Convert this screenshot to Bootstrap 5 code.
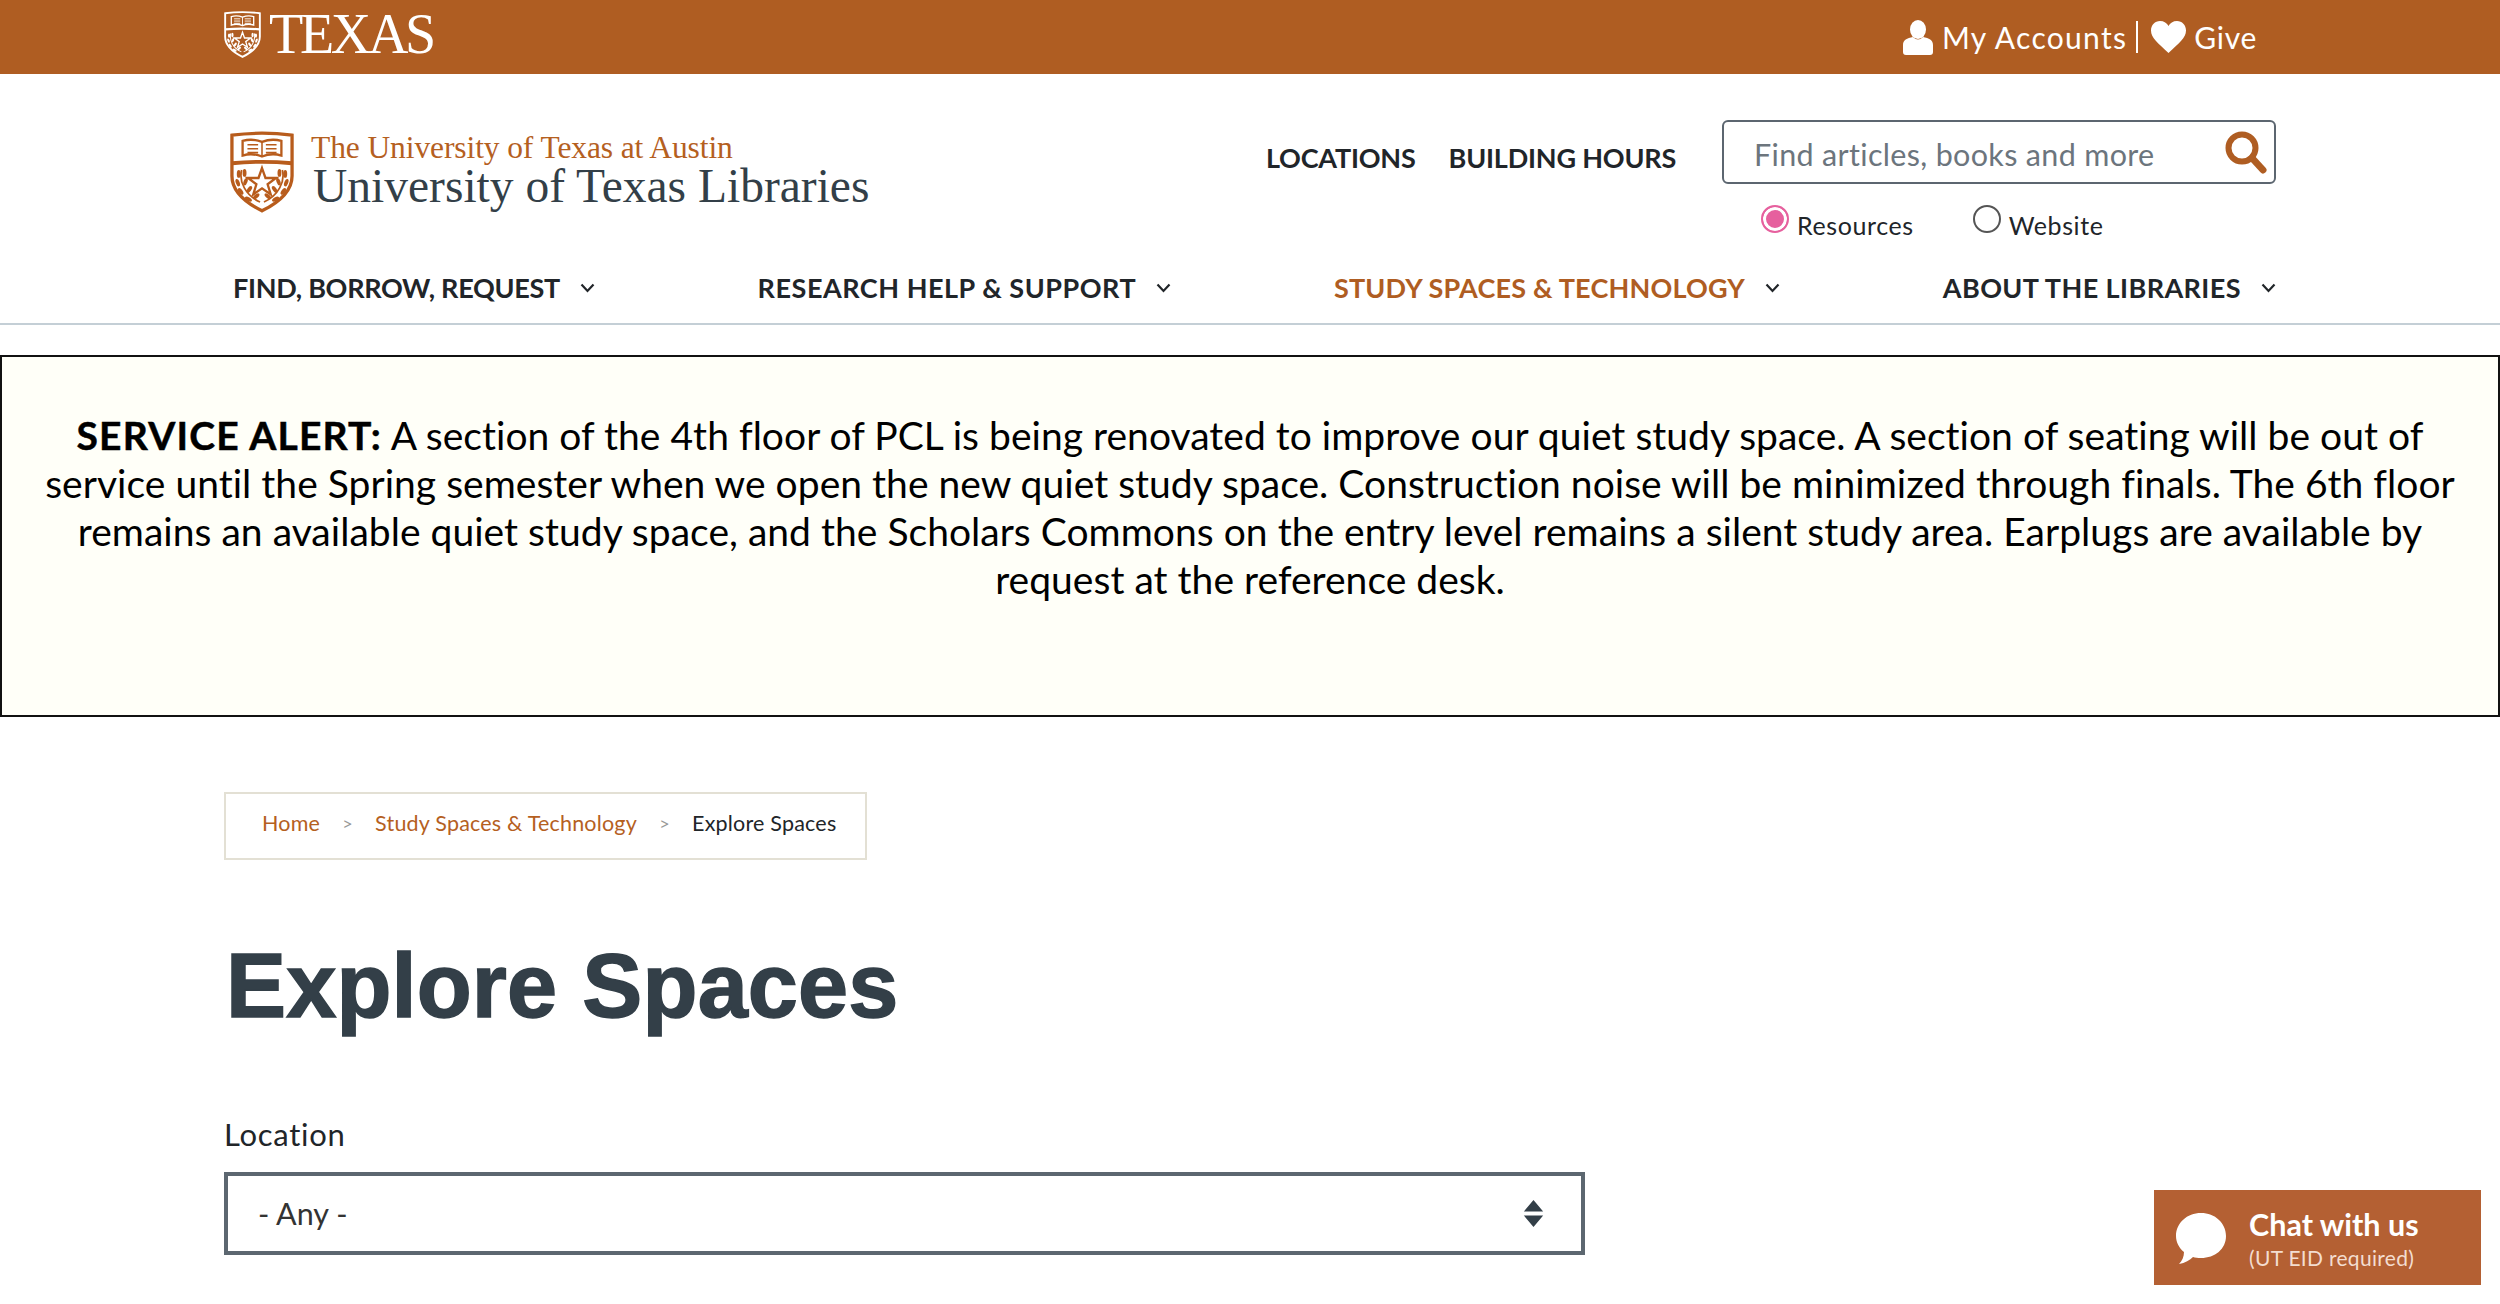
<!DOCTYPE html>
<html lang="en">
<head>
<meta charset="utf-8">
<title>Explore Spaces</title>
<link href="https://cdn.jsdelivr.net/npm/bootstrap@5.3.0/dist/css/bootstrap.min.css" rel="stylesheet">
<style>
html,body{height:100%;overflow:hidden}
body{font-family:Lato,"Liberation Sans",sans-serif;color:#212529;background:#fff}
a{text-decoration:none}
.topbar{background:#af5d22;height:74px;color:#fff}
.wrap{margin-left:224px;margin-right:224px}
.tx-brand{font:56px/1 "Liberation Serif",serif;color:#fff;height:74px;margin-top:-6px;letter-spacing:-3.3px}
.tx-links{font-size:30px;color:#fff;padding-right:19px}
.tx-links a{color:#fff}
.tx-acct{letter-spacing:1.3px}
.tx-give{letter-spacing:.7px}
.tx-sep{border-left:2px solid #fff;height:32px;margin:0 13px 0 9px}
.head-row{padding-top:46px}
.lg-link{margin-top:10px}
.lg-shield{width:64px;height:84px;color:#b85c1c;margin-left:6px}
.lg-text{font-family:"Liberation Serif",serif;margin-left:17px}
.lg-a{font-size:31.5px;line-height:36px;color:#b5601f;letter-spacing:-.1px}
.lg-b{font-size:47.5px;line-height:46px;color:#333f48;margin-left:2px;margin-top:-3px}
.head-links{height:76px;column-gap:33px}
.head-link{font-size:27px;font-weight:700;color:#212529;letter-spacing:-.2px}
.search-col{width:554px;margin-left:46px}
.search-box{height:64px;border:2px solid #5c6670;border-radius:6px;background:#fff;padding-right:6px}
.search-box input{border:0;outline:0;flex:1;min-width:0;height:100%;background:transparent;padding:3px 0 0 30px;font-size:30.5px;letter-spacing:.33px;color:#333}
.search-box input::placeholder{color:#6c757d;opacity:1}
.radio-row{margin-top:20px;padding-left:39px;font-size:25px;gap:59px}
.radio-row .form-check{padding:0;margin:0;min-height:0;display:flex;align-items:flex-start;gap:8px}
.radio-row .form-check-input{float:none;margin:1px 0 0;width:28px;height:28px;border:2px solid #555;background-image:none;flex:none;background:#fff}
.radio-row .form-check-input:checked{border-color:#e6609e;background:#e6609e;box-shadow:inset 0 0 0 3px #fff}
.radio-row .form-check-label{line-height:30px;margin-top:6px;letter-spacing:.6px}
.main-nav{padding:13px 0 0 9px;height:83px}
.main-nav a{font-size:27px;font-weight:700;color:#212529;gap:20px;line-height:40px}
.main-nav a.on{color:#af5d22}
.nv-a{letter-spacing:-.3px}
.nv-b{letter-spacing:.53px}
.nv-c{letter-spacing:.2px}
.nv-d{letter-spacing:.42px}
.chev-dark{color:#212529}
.nav-line{height:2px;background:#c4cfd6}
.svc-alert{margin-top:30px;height:362px;border:2px solid #111;background:#fffff8;color:#000;padding:54px 20px 0;font-size:39px;line-height:48px;border-radius:0;text-align:center;letter-spacing:.03px}
.svc-alert strong{letter-spacing:1.2px;-webkit-text-stroke:.5px #000}
.crumbs{margin-top:75px;width:643px;height:68px;border:2px solid #e3e0d4;padding:0 0 6px 36px;font-size:21.5px;letter-spacing:.2px}
.crumbs a{color:#b5601f}
.crumb-item{color:#212529}
.crumb-gt{color:#999;width:55px;text-align:center;font-size:18px}
.pg-title{font:700 90px/1.2 "Liberation Sans",sans-serif;color:#333f48;margin:72px 0 0 2px;letter-spacing:.15px;-webkit-text-stroke:1.5px #333f48}
.fld-label{font-size:31px;line-height:40px;margin:74px 0 18px;display:block;letter-spacing:.7px}
.fld-select{width:1361px;height:83px;border:4px solid #5c6770;border-radius:0;font-size:30.5px;padding:0 0 0 30px;color:#333;background-color:#fff;background-position:right 35px center;background-size:25px 29px;background-image:url("data:image/svg+xml,%3Csvg xmlns='http://www.w3.org/2000/svg' viewBox='0 0 24 30'%3E%3Cpath d='M12 1l10 12H2zM2 17h20L12 29z' fill='%23333f48'/%3E%3C/svg%3E")}
.chat-btn{position:fixed;left:2154px;top:1190px;width:327px;height:95px;background:#b46033;color:#fff;padding-left:21px;gap:22px}
.chat-a{font-size:30.5px;font-weight:700;line-height:36px;margin-top:2px}
.chat-b{font-size:21px;line-height:26px;color:#f3ddd0;margin-top:3px;letter-spacing:.3px}
</style>
</head>
<body>
<svg width="0" height="0" class="position-absolute">
<symbol id="shield" viewBox="0 0 66 84">
<path d="M2 4Q33 0 64 4V46C64 63 47 75 33 82C19 75 2 63 2 46Z" fill="none" stroke="currentColor" stroke-width="3.4"/>
<path d="M2 33Q33 30 64 33" fill="none" stroke="currentColor" stroke-width="4"/>
<path d="M13 10Q23 7 33 11Q43 7 53 10V25Q43 22 33 26Q23 22 13 25Z" fill="none" stroke="currentColor" stroke-width="2.4"/>
<path d="M33 11V26M18 14h11M18 18h11M18 22h11M37 14h11M37 18h11M37 22h11" fill="none" stroke="currentColor" stroke-width="1.6"/>
<path d="M33 38l3.600 10.200h10.900l-8.700 6.500 3.200 10.400-9-6.200-9 6.200 3.200-10.400-8.700-6.500h10.900z" fill="none" stroke="currentColor" stroke-width="2.400"/>
<path d="M12 40C9 52 16 66 31 73M54 40C57 52 50 66 35 73" fill="none" stroke="currentColor" stroke-width="1.8"/>
<g fill="currentColor"><ellipse cx="9" cy="44" rx="2" ry="4"/><ellipse cx="15" cy="43" rx="2" ry="4"/><ellipse cx="8" cy="53" rx="2" ry="4" transform="rotate(-20 8 53)"/><ellipse cx="16" cy="52" rx="2" ry="4" transform="rotate(20 16 52)"/><ellipse cx="11" cy="62" rx="2" ry="4" transform="rotate(-35 11 62)"/><ellipse cx="20" cy="60" rx="2" ry="4" transform="rotate(35 20 60)"/><ellipse cx="19" cy="70" rx="2" ry="4" transform="rotate(-60 19 70)"/><ellipse cx="27" cy="67" rx="2" ry="4" transform="rotate(50 27 67)"/><ellipse cx="57" cy="44" rx="2" ry="4"/><ellipse cx="51" cy="43" rx="2" ry="4"/><ellipse cx="58" cy="53" rx="2" ry="4" transform="rotate(20 58 53)"/><ellipse cx="50" cy="52" rx="2" ry="4" transform="rotate(-20 50 52)"/><ellipse cx="55" cy="62" rx="2" ry="4" transform="rotate(35 55 62)"/><ellipse cx="46" cy="60" rx="2" ry="4" transform="rotate(-35 46 60)"/><ellipse cx="47" cy="70" rx="2" ry="4" transform="rotate(60 47 70)"/><ellipse cx="39" cy="67" rx="2" ry="4" transform="rotate(-50 39 67)"/></g>
</symbol>
<symbol id="chev" viewBox="0 0 15 10"><path d="M1.500 1.500L7.500 8l6-6.500" fill="none" stroke="currentColor" stroke-width="2.200"/></symbol>
</svg>

<div class="topbar">
  <div class="wrap d-flex justify-content-between align-items-center h-100">
    <a href="#" class="tx-brand d-flex align-items-center gap-2">
      <svg width="37" height="47"><use href="#shield"/></svg><span>TEXAS</span>
    </a>
    <div class="tx-links d-flex align-items-center">
      <a href="#" class="tx-acct d-flex align-items-center gap-2">
        <svg width="32" height="35" viewBox="0 0 32 35" fill="#fff"><ellipse cx="16" cy="9.500" rx="8" ry="9.500"/><path d="M11 17c-6 1-10 3-10 8v7q0 3 3 3h24q3 0 3-3v-7c0-5-4-7-10-8q-5 5-10 0z"/></svg>
        My Accounts</a>
      <span class="tx-sep"></span>
      <a href="#" class="tx-give d-flex align-items-center gap-2">
        <svg width="35" height="32" viewBox="0 0 35 32" fill="#fff"><path d="M17.500 32C7 22 0 17 0 9.500 0 4 4 0 9 0c4 0 7 2 8.500 5C19 2 22 0 26 0c5 0 9 4 9 9.500C35 17 28 22 17.500 32z"/></svg>
        Give</a>
    </div>
  </div>
</div>

<header>
  <div class="wrap">
    <div class="head-row d-flex align-items-start">
      <a href="#" class="lg-link d-flex align-items-start">
        <svg class="lg-shield"><use href="#shield"/></svg>
        <div class="lg-text">
          <div class="lg-a">The University of Texas at Austin</div>
          <div class="lg-b">University of Texas Libraries</div>
        </div>
      </a>
      <div class="head-links ms-auto d-flex align-items-center">
        <a href="#" class="head-link">LOCATIONS</a>
        <a href="#" class="head-link">BUILDING HOURS</a>
      </div>
      <div class="search-col">
        <form class="search-box d-flex align-items-center">
          <input type="text" placeholder="Find articles, books and more" aria-label="Search">
          <svg width="44" height="44" viewBox="0 0 44 44"><circle cx="18" cy="18" r="13.500" fill="none" stroke="#af5d22" stroke-width="6"/><path d="M28 28l11 12" stroke="#af5d22" stroke-width="7" stroke-linecap="round"/></svg>
        </form>
        <div class="radio-row d-flex">
          <div class="form-check"><input class="form-check-input" type="radio" name="scope" id="r1" checked><label class="form-check-label" for="r1">Resources</label></div>
          <div class="form-check"><input class="form-check-input" type="radio" name="scope" id="r2"><label class="form-check-label" for="r2">Website</label></div>
        </div>
      </div>
    </div>
    <nav class="main-nav nav justify-content-between">
      <a href="#" class="nv-a d-flex align-items-center">FIND, BORROW, REQUEST <svg width="15" height="10"><use href="#chev"/></svg></a>
      <a href="#" class="nv-b d-flex align-items-center">RESEARCH HELP &amp; SUPPORT <svg width="15" height="10"><use href="#chev"/></svg></a>
      <a href="#" class="nv-c d-flex align-items-center on">STUDY SPACES &amp; TECHNOLOGY <svg class="chev-dark" width="15" height="10"><use href="#chev"/></svg></a>
      <a href="#" class="nv-d d-flex align-items-center">ABOUT THE LIBRARIES <svg width="15" height="10"><use href="#chev"/></svg></a>
    </nav>
  </div>
  <div class="nav-line"></div>
</header>

<div class="svc-alert"><strong>SERVICE ALERT:</strong> A section of the 4th floor of PCL is being renovated to improve our quiet study space. A section of seating will be out of<br>service until the Spring semester when we open the new quiet study space. Construction noise will be minimized through finals. The 6th floor<br>remains an available quiet study space, and the Scholars Commons on the entry level remains a silent study area. Earplugs are available by<br>request at the reference desk.</div>

<main class="wrap">
  <nav class="crumbs d-flex align-items-center" aria-label="breadcrumb">
    <a href="#">Home</a><span class="crumb-gt">&gt;</span><a href="#">Study Spaces &amp; Technology</a><span class="crumb-gt">&gt;</span><span class="crumb-item">Explore Spaces</span>
  </nav>
  <h1 class="pg-title">Explore Spaces</h1>
  <label class="fld-label" for="loc">Location</label>
  <select class="form-select fld-select" id="loc"><option>- Any -</option></select>
</main>

<a href="#" class="chat-btn d-flex align-items-center">
  <svg width="52" height="52" viewBox="0 0 52 52" fill="#fff"><path d="M26 1c14 0 25 10 25 23S40 46 26 46c-3 0-6-.4-8-1-3 3-8 6-14 7 3-3 5-7 5-12C4 36 1 30 1 24 1 11 12 1 26 1z"/></svg>
  <div>
    <div class="chat-a">Chat with us</div>
    <div class="chat-b">(UT EID required)</div>
  </div>
</a>
</body>
</html>
